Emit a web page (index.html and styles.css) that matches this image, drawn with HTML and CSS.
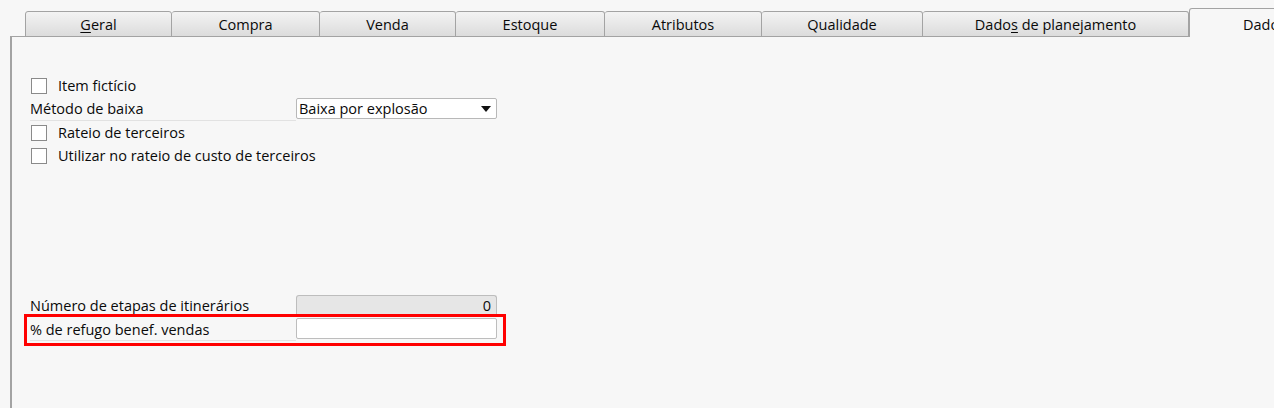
FILE: index.html
```html
<!DOCTYPE html>
<html lang="pt">
<head>
<meta charset="utf-8">
<title>Dados de item</title>
<link rel="stylesheet" href="styles.css">
</head>
<body>
<div class="window">
  <div class="tabs">
    <div class="tab t-geral"><span><u>G</u>eral</span></div>
    <div class="tab t-compra"><span>Compra</span></div>
    <div class="tab t-venda"><span>Venda</span></div>
    <div class="tab t-estoque"><span>Estoque</span></div>
    <div class="tab t-atrib"><span>Atributos</span></div>
    <div class="tab t-qual"><span>Qualidade</span></div>
    <div class="tab t-plan"><span>Dado<u>s</u> de planejamento</span></div>
    <div class="tab active t-prod"><span>Dados de produção</span></div>
  </div>
  <div class="panel">
    <div class="row check-row r1">
      <span class="checkbox"></span><span class="check-label">Item fictício</span>
    </div>
    <div class="row field-row r2">
      <span class="label">Método de baixa</span>
      <div class="select"><span>Baixa por explosão</span><span class="arrow"></span></div>
    </div>
    <div class="row check-row">
      <span class="checkbox"></span><span class="check-label">Rateio de terceiros</span>
    </div>
    <div class="row check-row">
      <span class="checkbox"></span><span class="check-label">Utilizar no rateio de custo de terceiros</span>
    </div>
    <div class="row field-row r-num">
      <span class="label plain">Número de etapas de itinerários</span>
      <div class="input disabled">0</div>
    </div>
    <div class="highlight">
      <div class="row field-row r-ref">
        <span class="label">% de refugo benef. vendas</span>
        <div class="input"></div>
      </div>
    </div>
  </div>
</div>
</body>
</html>
```

FILE: styles.css
```css
html, body {
  margin: 0;
  padding: 0;
  background: #f7f7f7;
  overflow: hidden;
}
body {
  width: 1274px;
  height: 408px;
  font-family: "Open Sans", "Noto Sans", sans-serif;
  font-size: 14.5px;
  color: #0a0a0a;
}
.window {
  display: flex;
  flex-direction: column;
  height: 408px;
}
.tabs {
  display: flex;
  align-items: flex-end;
  padding: 8px 0 0 25px;
  height: 28px;
  box-sizing: content-box;
  white-space: nowrap;
}
.tab {
  flex: none;
  box-sizing: border-box;
  height: 26px;
  margin-bottom: -1px;
  border: 1px solid #a3a3a3;
  border-left-width: 0;
  border-radius: 3px 3px 0 0;
  background: linear-gradient(#f3f3f3, #dcdcdc);
  display: flex;
  align-items: center;
  justify-content: center;
  line-height: 1;
  padding-top: 3px;
}
.tab:first-child { border-left-width: 1px; }
.tab u { text-decoration-thickness: 1px; text-underline-offset: 2px; }
.t-geral { width: 147px; }
.t-compra { width: 148px; }
.t-venda { width: 136px; }
.t-estoque { width: 149px; }
.t-atrib { width: 157px; }
.t-qual { width: 161px; }
.t-plan { width: 266px; }
.tab.active {
  width: 200px;
  height: 29px;
  background: #f7f7f7;
  border-left-width: 1px;
  border-bottom: 0;
  position: relative;
  z-index: 1;
  justify-content: flex-start;
  padding-left: 53px;
  padding-top: 5px;
}
.panel {
  flex: 1;
  margin-left: 10px;
  border-left: 2px solid #a3a3a3;
  border-top: 1px solid #a3a3a3;
  padding: 37px 0 0 18px;
  display: flex;
  flex-direction: column;
  align-items: flex-start;
}
.row {
  display: flex;
  align-items: center;
  width: 467px;
}
.check-row { height: 23px; }
.checkbox {
  width: 14px;
  height: 14px;
  border: 1px solid #8a8a8a;
  background: #fff;
  margin-left: 1px;
  flex: none;
}
.check-label { margin-left: 11px; }
.field-row .label {
  width: 266px;
  flex: none;
  align-self: stretch;
  display: flex;
  align-items: center;
  box-sizing: border-box;
  border-bottom: 1px solid #e2e2e2;
}
.field-row .label.plain { border-bottom: 0; }
.r2 { height: 24px; }
.select {
  width: 201px;
  height: 21px;
  box-sizing: border-box;
  border: 1px solid #b8b8b8;
  border-radius: 2px;
  background: #fff;
  display: flex;
  align-items: center;
  justify-content: space-between;
  padding: 0 5px 0 2px;
  align-self: flex-start;
  margin-top: 1px;
}
.arrow {
  width: 0;
  height: 0;
  border-left: 5px solid transparent;
  border-right: 5px solid transparent;
  border-top: 6px solid #111;
}
.input {
  width: 201px;
  height: 21px;
  box-sizing: border-box;
  border: 1px solid #bdbdbd;
  border-radius: 2px;
  background: #fff;
  flex: none;
}
.r-num {
  margin-top: 127px;
  height: 20px;
  align-items: flex-end;
}
.r-num .label { align-items: flex-end; line-height: 17px; }
.input.disabled {
  height: 19px;
  background: #e6e6e6;
  border-radius: 3px 3px 0 0;
  border-bottom: 0;
  text-align: right;
  padding-right: 5px;
  line-height: 19px;
}
.highlight {
  margin-left: -6px;
  border: 3px solid #f00;
  padding: 1px 6px 2px 3px;
}
.r-ref { height: 23px; align-items: flex-start; }
.r-ref .label { padding-top: 1px; }
```
